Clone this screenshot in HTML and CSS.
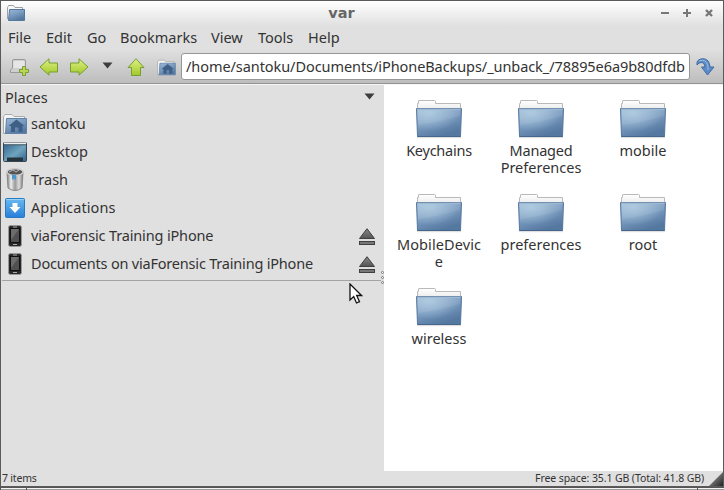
FILE: index.html
```html
<!DOCTYPE html>
<html lang="en">
<head>
<meta charset="utf-8">
<title>var</title>
<link rel="stylesheet" href="styles.css">
</head>
<body>
<svg class="defs" aria-hidden="true">
  <defs>
    <linearGradient id="blue" x1="0" y1="0" x2=".5" y2="1"><stop offset="0" stop-color="#9ab7d3"/><stop offset=".5" stop-color="#7b9cc0"/><stop offset="1" stop-color="#5578a1"/></linearGradient>
    <radialGradient id="shine" cx=".28" cy=".15" r=".7"><stop offset="0" stop-color="#b5d2e6" stop-opacity=".7"/><stop offset="1" stop-color="#b5d2e6" stop-opacity="0"/></radialGradient>
    <linearGradient id="paper" x1="0" y1="0" x2="0" y2="1"><stop offset="0" stop-color="#fff"/><stop offset="1" stop-color="#e8e8e8"/></linearGradient>
    <linearGradient id="green" x1="0" y1="0" x2="0" y2="1"><stop offset="0" stop-color="#e0ef83"/><stop offset="1" stop-color="#a1c929"/></linearGradient>
    <linearGradient id="metal" x1="0" y1="0" x2="1" y2="0"><stop offset="0" stop-color="#777"/><stop offset=".25" stop-color="#eee"/><stop offset=".5" stop-color="#999"/><stop offset=".75" stop-color="#ddd"/><stop offset="1" stop-color="#777"/></linearGradient>
    <linearGradient id="app" x1="0" y1="0" x2="0" y2="1"><stop offset="0" stop-color="#6cb9ef"/><stop offset="1" stop-color="#277fdb"/></linearGradient>
    <linearGradient id="dark" x1="0" y1="0" x2="0" y2="1"><stop offset="0" stop-color="#888"/><stop offset="1" stop-color="#555"/></linearGradient>
    <linearGradient id="screen" x1="0" y1="0" x2="1" y2="1"><stop offset="0" stop-color="#2f5e8c"/><stop offset=".55" stop-color="#6fa4bd"/><stop offset="1" stop-color="#315f8d"/></linearGradient>
    <linearGradient id="grip" x1="0" y1="0" x2="1" y2="1"><stop offset=".3" stop-color="#888"/><stop offset="1" stop-color="#222"/></linearGradient>
    <symbol id="folder" viewBox="0 0 48 40">
      <path d="M2 38.5H46" stroke="#000" stroke-opacity=".12" stroke-width="1.5"/>
      <path d="M2.5 12V4.5H3.5V2Q3.5 1.5 4 1.5H19.5Q20.5 1.5 20.5 2.500V4.500H45.500V12Z" fill="url(#paper)" stroke="#b9b9b9"/>
      <path d="M1.500 9.500H46.500L45.500 37.500H2.500Z" fill="url(#blue)" stroke="#55779f"/>
      <path d="M2.500 10.500H45.500L44.800 36H3.200Z" fill="url(#shine)"/>
      <path d="M3 26Q21 24 45 17V10.500H2.700Z" fill="#fff" opacity=".07"/>
      <path d="M2 9.500H46" stroke="#7392b2"/><path d="M2.500 10.500H45.500" stroke="#9db8d3"/><path d="M2.500 37.500H45.500" stroke="#44658c"/>
    </symbol>
    <symbol id="home" viewBox="0 0 24 22">
      <path d="M.5 20V3.500L2 1.500H9L11 3.500H21.500V8" fill="#f4f4f4" stroke="#aaa"/>
      <path d="M.5 20.500H3" stroke="#999"/>
      <path d="M3.500 5.500H23.500V20.500H2.500Z" fill="url(#blue)" stroke="#5f82a9"/>
      <path d="M13.500 6.500L21.500 13H19.500V19H15.500V14.500H12V19H8V13H5.500Z" fill="#3f5f87"/>
    </symbol>
    <symbol id="small-folder" viewBox="0 0 18 17">
      <path d="M.5 14V2.500L1.500.5H6.500L8 2.500H15.500V5" fill="#f7f7f7" stroke="#a0a0a0"/>
      <path d="M2.500 4.500H17.500V15.500H1.500Z" fill="url(#blue)" stroke="#54779f"/>
    </symbol>
    <symbol id="phone" viewBox="0 0 14 22">
      <rect x=".5" y=".5" width="13" height="21" rx="2" fill="#292929" stroke="#999"/>
      <rect x="2.500" y="3.500" width="9" height="14" fill="#505050" stroke="#111"/>
      <path d="M3 4H11L3 15Z" fill="#6c6c6c"/><path d="M5 19.500H9M5 2H9" stroke="#aaa"/>
    </symbol>
    <symbol id="eject" viewBox="0 0 18 18">
      <path d="M9 .7L16.500 10.500H1.500Z" fill="url(#dark)" stroke="#404040"/><rect x="1.500" y="13.500" width="15" height="3" fill="#777" stroke="#404040"/>
    </symbol>
    <symbol id="arrow" viewBox="0 0 20 18"><path d="M1 9L10 .8V5H18.500V14H10V17.200Z" fill="url(#green)" stroke="#759f35"/></symbol>
  </defs>
</svg>
<div class="window">
  <header class="title">
    <svg class="app-icon"><use href="#small-folder"/></svg>
    <h1>var</h1>
    <svg class="controls" viewBox="0 0 50 10"><path d="M1 5H9M23 5H31M27 1V9" stroke="#777" stroke-width="2"/><path d="M46 2L52 8M52 2L46 8" stroke="#777" stroke-width="2.400"/></svg>
  </header>
  <nav class="menu"><span>File</span><span>Edit</span><span>Go</span><span>Bookmarks</span><span>View</span><span>Tools</span><span>Help</span></nav>
  <div class="toolbar">
    <svg class="new-tab" viewBox="0 0 19 17"><path d="M2.500 9V2Q2.500.5 4 .5H14Q15.500.5 15.500 2V9L17 12V13.500H.5V11Z" fill="#cfcfcf" stroke="#999"/><path d="M3.500 9V2H14.500V9Z" fill="#e6e6e6"/><path d="M12.500 7.500H15.500V10.500H18.500V13.500H15.500V16.500H12.500V13.500H9.500V10.500H12.500Z" fill="#bbd654" stroke="#789e37"/></svg>
    <svg class="back"><use href="#arrow"/></svg>
    <svg class="forward"><use href="#arrow"/></svg>
    <svg class="history" viewBox="0 0 11 7"><path d="M.5.5H10.500L5.500 6.500Z" fill="#3c3c3c"/></svg>
    <svg class="up" viewBox="0 0 18 18"><path d="M9 .8L17 9.500H13.500V17.500H4.500V9.500H1Z" fill="url(#green)" stroke="#759f35"/></svg>
    <svg class="go-home"><use href="#home"/></svg>
    <div class="address"><span>/home/santoku/Documents/iPhoneBackups/_unback_/78895e6a9b80dfdb</span></div>
    <svg class="jump" viewBox="0 0 19 18"><path d="M1 7Q0 1 7 .7Q13.500 1 14 9H18L11.500 17L5.500 9H9Q8.500 4.500 5 4.500Q3 4.500 1 7Z" fill="#5c8cc7" stroke="#3e6ba4"/><path d="M3 3Q10 0 12 8V12" stroke="#9dbce1" fill="none"/></svg>
  </div>
  <div class="body">
    <aside>
      <div class="places"><span>Places</span><svg viewBox="0 0 11 7"><path d="M.5.5H10.500L5.500 6.500Z" fill="#3c3c3c"/></svg></div>
      <ul>
        <li><i><svg class="i-home"><use href="#home"/></svg></i><span>santoku</span></li>
        <li><i><svg class="i-desk" viewBox="0 0 24 20"><rect x=".5" y=".5" width="23" height="19" rx="1" fill="url(#screen)" stroke="#35444f"/><path d="M1 1.500H23" stroke="#eee" stroke-width="2"/><path d="M1 2.800H23" stroke="#4b5962"/><path d="M4 15.500H20V19H4Z" fill="#26343e"/></svg></i><span class="wide">Desktop</span></li>
        <li><i><svg class="i-trash" viewBox="0 0 18 24"><path d="M1 4L2 20Q9 25 16 20L17 4Z" fill="url(#metal)" stroke="#888"/><ellipse cx="9" cy="4" rx="8" ry="3.300" fill="#555" stroke="#ccc" stroke-width="1.500"/><path d="M3 4L7 2L10 4L13 2" stroke="#bbb" fill="none"/><path d="M6 7H10V12L8 10.500L6 12Z" fill="#4599cf"/></svg></i><span>Trash</span></li>
        <li><i><svg class="i-app" viewBox="0 0 20 20"><rect x=".5" y=".5" width="19" height="19" rx="1" fill="url(#app)" stroke="#277bc2"/><path d="M1.500 1.500H18.500" stroke="#9bd2f6"/><path d="M7.500 5H12.500V9H15.500L10 15L4.500 9H7.500Z" fill="#fff"/></svg></i><span class="wide">Applications</span></li>
        <li><i><svg class="i-phone"><use href="#phone"/></svg></i><span class="via">viaForensic Training iPhone</span><svg class="eject"><use href="#eject"/></svg></li>
        <li><i><svg class="i-phone"><use href="#phone"/></svg></i><span class="docs">Documents on viaForensic Training iPhone</span><svg class="eject"><use href="#eject"/></svg></li>
      </ul>
      <svg class="handle" viewBox="0 0 3 13"><g fill="#f8f8f8" stroke="#666" stroke-width=".8"><circle cx="1.500" cy="1.500" r="1"/><circle cx="1.500" cy="6.500" r="1"/><circle cx="1.500" cy="11.500" r="1"/></g></svg>
      <svg class="cursor" viewBox="0 0 14 22"><path d="M1 1V17L4.700 13.500L7.500 20L10.500 18.700L7.700 12.500H12.500Z" fill="#fff" stroke="#111" stroke-width="1.300"/></svg>
    </aside>
    <main>
      <figure><svg><use href="#folder"/></svg><figcaption class="keychains">Keychains</figcaption></figure>
      <figure><svg><use href="#folder"/></svg><figcaption><span class="managed">Managed</span><br>Preferences</figcaption></figure>
      <figure><svg><use href="#folder"/></svg><figcaption>mobile</figcaption></figure>
      <figure><svg><use href="#folder"/></svg><figcaption class="wide">MobileDevic<br>e</figcaption></figure>
      <figure><svg><use href="#folder"/></svg><figcaption>preferences</figcaption></figure>
      <figure><svg><use href="#folder"/></svg><figcaption>root</figcaption></figure>
      <figure><svg><use href="#folder"/></svg><figcaption>wireless</figcaption></figure>
    </main>
  </div>
  <footer><span class="count">7 items</span><span class="space">Free space: 35.1 GB (Total: 41.8 GB)</span><svg viewBox="0 0 14 14"><path d="M14 0V14H0Z" fill="url(#grip)"/></svg></footer>
</div>
<div class="below"><b></b><b></b><b></b></div>
</body>
</html>
```
FILE: styles.css
```css
* { box-sizing: border-box; }
html, body { margin: 0; height: 490px; overflow: hidden; }
body { background: #555; color: #333; font: 14.5px/17px "Noto Sans", sans-serif; white-space: nowrap; }
.defs { position: absolute; width: 0; height: 0; }
svg { display: block; flex: none; }
.window { height: 487px; border: 1px solid #5b5959; display: flex; flex-direction: column; background: #e0e0e0; }
.title { height: 25px; display: flex; align-items: center; padding: 0 8px 0 6px; background: linear-gradient(#fff, #e0e0e0); }
.app-icon { width: 18px; height: 17px; }
.title h1 { flex: 1; margin: 0 0 2px; padding-right: 2px; text-align: center; color: #666; font: bold 14.5px/20px "DejaVu Sans", sans-serif; }
.controls { width: 50px; height: 10px; overflow: visible; margin: 0 5px 2px 0; }
.menu { height: 24px; display: grid; grid-template-columns: 38px 41px 33px 91px 47px 50px 50px; align-items: center; padding: 0 0 2px 7px; }
.toolbar { height: 34px; display: flex; align-items: center; padding: 0 8px; background: linear-gradient(#dfdfdf, #bdbdbd); border-bottom: 1px solid #949494; }
.new-tab { width: 19px; height: 17px; margin: 1px 11px 0 1px; }
.back, .forward { width: 20px; height: 18px; }
.back { margin-left: -1px; }
.forward { margin-left: 10px; transform: scaleX(-1); }
.history { width: 11px; height: 7px; margin: -2px 0 0 13px; }
.up { width: 18px; height: 18px; margin-left: 14px; }
.go-home { width: 19px; height: 17px; margin: 2px 0 0 12px; }
.address { width: 509px; height: 27px; margin-left: 5px; padding: 0 4px; border: 1px solid #969696; border-radius: 3px; background: #fff; overflow: hidden; line-height: 25px; letter-spacing: -.07px; }
.jump { width: 19px; height: 18px; margin-left: 6px; }
.body { flex: 1; display: flex; border-top: 1px solid #f5f5f5; min-height: 0; }
aside { position: relative; width: 383px; background: #e0e0e0; }
.places { height: 25px; display: flex; align-items: center; justify-content: space-between; padding: 0 9px 0 4px; }
.places svg { width: 11px; height: 7px; margin-top: -3px; }
ul { list-style: none; margin: 0 3px 0 1px; padding: 0 0 2px; border-bottom: 1px solid #a4a4a4; }
li { height: 28px; display: flex; align-items: center; }
li span { padding-bottom: 2px; }
i { width: 26px; display: flex; justify-content: center; margin-right: 3px; }
.i-home { width: 24px; height: 22px; }
.i-desk { width: 24px; height: 20px; }
.i-trash { width: 18px; height: 24px; }
.i-app { width: 20px; height: 20px; }
.i-phone { width: 14px; height: 22px; }
.eject { width: 18px; height: 18px; margin: 1px 5px 0 auto; }
.wide { letter-spacing: .1px; }
.via { letter-spacing: -.15px; }
.docs { letter-spacing: -.2px; }
.handle { position: absolute; left: 380px; top: 186px; width: 3px; height: 13px; }
.cursor { position: absolute; left: 348px; top: 198px; width: 14px; height: 22px; }
main { flex: 1; background: #fff; display: grid; grid-template-columns: repeat(3, 102px); grid-auto-rows: 94px; padding: 14px 0 0 4px; align-content: start; }
figure { margin: 0; display: flex; flex-direction: column; align-items: center; }
figure svg { width: 48px; height: 40px; }
figcaption { margin-top: 3px; text-align: center; }
.keychains { letter-spacing: -.25px; }
.managed { letter-spacing: -.2px; }
footer { height: 15px; display: flex; align-items: center; font-size: 10.5px; line-height: 15px; padding-left: 1px; }
.count { letter-spacing: -.2px; }
.space { margin-left: auto; letter-spacing: -.1px; }
footer svg { width: 14px; height: 14px; margin-left: 5px; }
.below { height: 3px; display: grid; grid-template-columns: 25px 670px 1fr; gap: 1px; padding: 1px 0 0 1px; }
.below b { background: linear-gradient(#f5f5f5 50%, #999 50%); }
```
